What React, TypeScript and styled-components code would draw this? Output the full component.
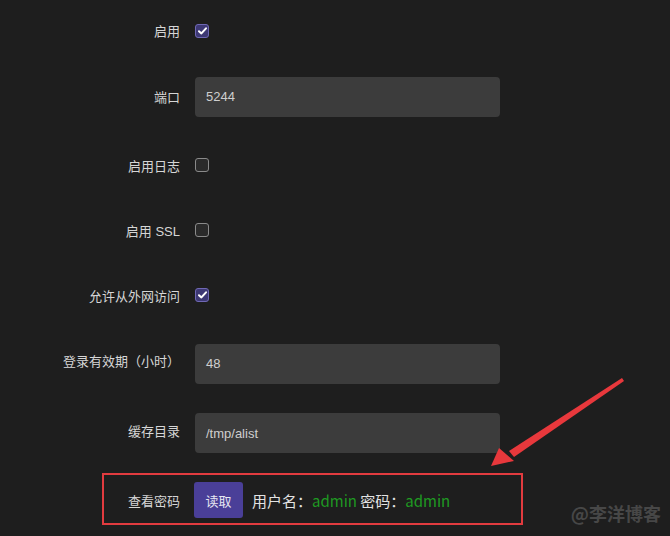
import React from 'react';
import styled, { createGlobalStyle } from 'styled-components';

const GlobalStyle = createGlobalStyle`
  html, body {
    margin: 0;
    padding: 0;
    background: #1e1e1e;
  }
  body {
    font-family: "Liberation Sans", "Noto Sans CJK SC", sans-serif;
    color: #d8d8d8;
  }
`;

interface Field {
  label: string;
  kind: 'check' | 'text';
  checked?: boolean;
  value?: string;
  height: number;
}

const fields: Field[] = [
  { label: '启用', kind: 'check', checked: true, height: 61 },
  { label: '端口', kind: 'text', value: '5244', height: 71 },
  { label: '启用日志', kind: 'check', checked: false, height: 66 },
  { label: '启用 SSL', kind: 'check', checked: false, height: 64 },
  { label: '允许从外网访问', kind: 'check', checked: true, height: 66 },
  { label: '登录有效期（小时）', kind: 'text', value: '48', height: 71 },
  { label: '缓存目录', kind: 'text', value: '/tmp/alist', height: 68 },
];

const Page = styled.div`
  position: relative;
  width: 670px;
  height: 536px;
  overflow: hidden;
  background: #1e1e1e;
`;

const Form = styled.div`
  display: flex;
  flex-direction: column;
`;

const Row = styled.div<{ $h: number }>`
  display: grid;
  grid-template-columns: 180px 305px;
  column-gap: 15px;
  align-items: center;
  height: ${p => p.$h}px;
`;

const Label = styled.div<{ $shift?: number }>`
  text-align: right;
  font-size: 13px;
  color: #d6d6d6;
  white-space: nowrap;
  transform: translateY(${p => p.$shift || 0}px);
`;

const Box = styled.span<{ $on: boolean }>`
  display: flex;
  align-items: center;
  justify-content: center;
  width: 14px;
  height: 14px;
  box-sizing: border-box;
  border-radius: 3px;
  border: 1.5px solid ${p => (p.$on ? '#6f68b4' : '#8a8a8a')};
  background: ${p => (p.$on ? '#3d3874' : '#2a2a2a')};
`;

const Input = styled.div`
  height: 40px;
  box-sizing: border-box;
  background: #3c3c3c;
  border-radius: 4px;
  padding: 0 11px;
  display: flex;
  align-items: center;
  font-size: 13px;
  color: #cfcfcf;
`;

const PwRow = styled.div`
  display: grid;
  grid-template-columns: 180px auto;
  column-gap: 14px;
  align-items: center;
  height: 66px;
`;

const Controls = styled.div`
  display: flex;
  align-items: center;
  gap: 9px;
`;

const ReadButton = styled.button`
  width: 49px;
  height: 36px;
  border: none;
  border-radius: 3px;
  background: #4a3f98;
  color: #e6e6f2;
  font-family: "Noto Sans CJK SC", sans-serif;
  font-size: 13px;
  padding: 0;
`;

const Info = styled.span`
  font-family: "Noto Sans CJK SC", sans-serif;
  font-size: 15px;
  color: #e2e2e2;
`;

const Green = styled.span`
  color: #1f9a22;
`;

const Highlight = styled.div`
  position: absolute;
  left: 102px;
  top: 473px;
  width: 421px;
  height: 52px;
  box-sizing: border-box;
  border: 2px solid #e23b3f;
  pointer-events: none;
`;

const Arrow = styled.svg`
  position: absolute;
  left: 0;
  top: 0;
  pointer-events: none;
`;

const Watermark = styled.div`
  position: absolute;
  right: 9px;
  bottom: 14px;
  font-family: "Noto Sans CJK SC", sans-serif;
  font-size: 18px;
  font-weight: 700;
  line-height: 1;
  color: #474747;
`;

const Check = () => (
  <svg width="9" height="8" viewBox="0 0 9 8">
    <path d="M1 4.2 L3.4 6.4 L8 1.3" fill="none" stroke="#fff" strokeWidth="2" strokeLinecap="round" strokeLinejoin="round" />
  </svg>
);

export default function App() {
  return (
    <Page>
      <GlobalStyle />
      <Form>
        {fields.map(f => (
          <Row key={f.label} $h={f.height}>
            <Label $shift={f.label.startsWith('登录') || f.label === '缓存目录' ? -3 : 0}>{f.label}</Label>
            {f.kind === 'check' ? (
              <Box $on={!!f.checked}>{f.checked && <Check />}</Box>
            ) : (
              <Input>{f.value}</Input>
            )}
          </Row>
        ))}
        <PwRow>
          <Label>查看密码</Label>
          <Controls>
            <ReadButton>读取</ReadButton>
            <Info>
              用户名：<Green>admin</Green> 密码：<Green>admin</Green>
            </Info>
          </Controls>
        </PwRow>
      </Form>
      <Highlight />
      <Arrow width="670" height="536" viewBox="0 0 670 536">
        <polygon points="622,378 624,381 514,457 509,451" fill="#e8383c" />
        <polygon points="491,466 499,448 514,461" fill="#e8383c" />
      </Arrow>
      <Watermark>@李洋博客</Watermark>
    </Page>
  );
}
